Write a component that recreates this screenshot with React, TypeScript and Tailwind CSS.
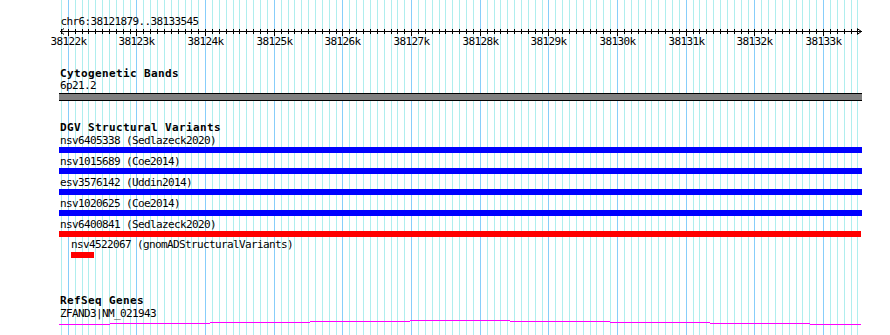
import React from "react";

const START = 38121879;
const END = 38133545;
const X0 = 60;
const W = 801;
const px = (b: number) => X0 + ((b - START) * W) / (END - START);

const ticks: number[] = [];
for (let b = 38121900; b <= 38133500; b += 100) ticks.push(b);

const mono = "font-['DejaVu_Sans_Mono',monospace] text-[11px] leading-[12px] whitespace-nowrap text-black";
const label = `${mono} tracking-[-0.62px] pl-[1px]`;
const title = `${mono} font-bold tracking-[0.38px] pl-[1px]`;

const variants = [
  { name: "nsv6405338 (Sedlazeck2020)", color: "bg-[#0000ff]" },
  { name: "nsv1015689 (Coe2014)", color: "bg-[#0000ff]" },
  { name: "esv3576142 (Uddin2014)", color: "bg-[#0000ff]" },
  { name: "nsv1020625 (Coe2014)", color: "bg-[#0000ff]" },
  { name: "nsv6400841 (Sedlazeck2020)", color: "bg-[#ff0000] w-[802px]" },
];

// transcript line, drawn as small steps (x0, x1, y offset)
const geneSteps = [
  [59, 110, 4],
  [110, 210, 3],
  [210, 310, 2],
  [310, 410, 1],
  [410, 510, 0],
  [510, 610, 1],
  [610, 710, 2],
  [710, 810, 3],
  [810, 861, 4],
];

const Grid = () => (
  <svg className="absolute inset-0" width={890} height={335}>
    {ticks.map((b) => {
      const x = Math.floor(px(b)) + 0.5;
      const major = b % 1000 === 0;
      return (
        <line
          key={b}
          x1={x}
          x2={x}
          y1={0}
          y2={335}
          stroke={major ? "#87cefa" : "#afeeee"}
          strokeWidth={1}
        />
      );
    })}
  </svg>
);

const Ruler = () => (
  <svg width={890} height={68} className="block">
    <g fontFamily="DejaVu Sans Mono, monospace" fontSize={11} letterSpacing={-0.62} fill="#000">
      <text x={60.5} y={25}>chr6:38121879..38133545</text>
      {ticks
        .filter((b) => b % 1000 === 0)
        .map((b) => (
          <text key={b} x={Math.floor(px(b)) + 0.5} y={45} textAnchor="middle">
            {Math.round(b / 1000)}k
          </text>
        ))}
    </g>
    <g stroke="#000" strokeWidth={1} shapeRendering="crispEdges">
      <line x1={60} x2={862} y1={31.5} y2={31.5} />
      <polyline points="64,28.5 60.5,31.5 64,34.5" fill="none" shapeRendering="auto" />
      <polyline points="857,28.5 861.5,31.5 857,34.5" fill="none" shapeRendering="auto" />
      {ticks.map((b) => {
        const x = Math.floor(px(b)) + 0.5;
        const major = b % 1000 === 0;
        return <line key={b} x1={x} x2={x} y1={28.5} y2={major ? 36 : 34} />;
      })}
    </g>
  </svg>
);

export default function App() {
  return (
    <div className="relative w-[890px] h-[335px] overflow-hidden bg-white">
      <Grid />
      <div className="relative flex flex-col">
        <Ruler />
        <div className="ml-[59px] w-[803px] flex flex-col">
          <div className={title}>Cytogenetic Bands</div>
          <div className={label}>6p21.2</div>
          <div className="mt-[1px] h-[8px] bg-[#808080] border-y border-black" />

          <div className={`${title} mt-[21px]`}>DGV Structural Variants</div>
          <div className="mt-[1px] flex flex-col gap-[3px]">
            {variants.map((v) => (
              <div key={v.name} className="flex flex-col">
                <div className={label}>{v.name}</div>
                <div className={`h-[6px] ${v.color}`} />
              </div>
            ))}
          </div>
          <div className={`${label} mt-[2px] ml-[11px]`}>nsv4522067 (gnomADStructuralVariants)</div>
          <div className="mt-[1px] ml-[12px] w-[23px] h-[6px] bg-[#ff0000]" />

          <div className={`${title} mt-[37px]`}>RefSeq Genes</div>
          <div className={`${label} mt-[1px]`}>ZFAND3|NM_021943</div>
          <svg width={803} height={6} className="block -ml-[59px] overflow-visible">
            {geneSteps.map(([a, b, y]) => (
              <rect key={a} x={a} y={y} width={b - a} height={1} fill="#ff00ff" />
            ))}
          </svg>
        </div>
      </div>
    </div>
  );
}
